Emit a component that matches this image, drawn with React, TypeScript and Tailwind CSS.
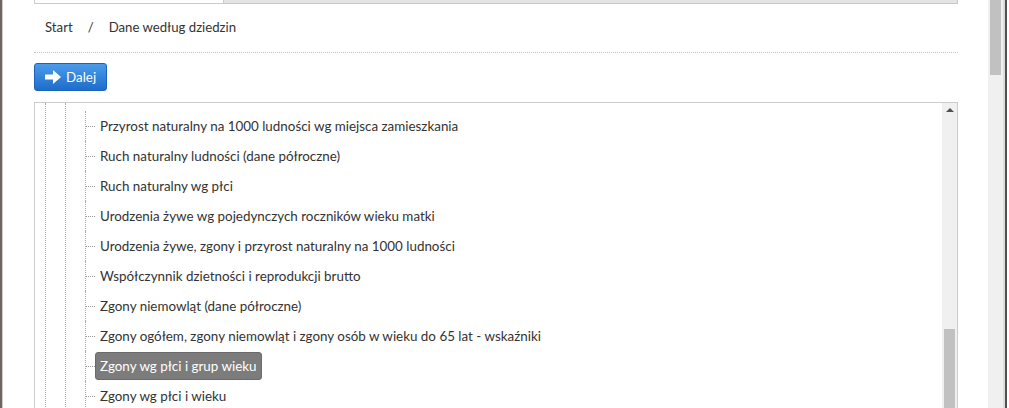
const items = [
  "Przyrost naturalny na 1000 ludności wg miejsca zamieszkania",
  "Ruch naturalny ludności (dane półroczne)",
  "Ruch naturalny wg płci",
  "Urodzenia żywe wg pojedynczych roczników wieku matki",
  "Urodzenia żywe, zgony i przyrost naturalny na 1000 ludności",
  "Współczynnik dzietności i reprodukcji brutto",
  "Zgony niemowląt (dane półroczne)",
  "Zgony ogółem, zgony niemowląt i zgony osób w wieku do 65 lat - wskaźniki",
  "Zgony wg płci i grup wieku",
  "Zgony wg płci i wieku",
]

const selected = "Zgony wg płci i grup wieku"

export default function App() {
  return (
    <div className="flex h-[408px] w-[1009px] overflow-hidden bg-white font-['Lato',sans-serif] text-[#333]">
      {/* window edge */}
      <div className="w-[2px] bg-[#6b6661]" />
      <div className="w-[1px] bg-[#d2cec9]" />

      <div className="min-w-0 flex-1 pl-[31px] pr-[30px]">
        {/* tabs */}
        <div className="flex h-[4px]">
          <div className="w-[190px] border-x border-b border-[#ccc] bg-white" />
          <div className="flex-1 border-b border-r border-[#c8c8c8] bg-[#e4e4e4]" />
        </div>

        {/* breadcrumb */}
        <div className="flex h-[49px] items-center border-b border-dotted border-[#c4c4c4] pl-[11px] text-[13.2px]">
          <span>Start</span>
          <span className="px-[15px]">/</span>
          <span>Dane według dziedzin</span>
        </div>

        <div className="pt-[10px]">
          <button className="flex h-[28px] w-[73px] items-center gap-[5px] rounded-[3px] border border-[#1b63bd] bg-linear-to-b from-[#4b9bea] to-[#1c6dcb] pl-[10px] text-[13.4px] text-white">
            <svg width="16" height="14" viewBox="0 0 16 14">
              <path d="M0 4.5h8V0l8 7-8 7V9.5H0z" fill="#fff" />
            </svg>
            Dalej
          </button>
        </div>

        {/* tree */}
        <div className="mt-[11px] flex h-[400px] border border-[#ccc]">
          <div className="flex flex-1">
            <div className="ml-[10px] w-[20px] border-l border-dotted border-[#aaa]" />
            <div className="w-[20px] border-l border-dotted border-[#aaa]" />
            <ul className="pt-[8px]">
              {items.map((t) => (
                <li key={t} className="flex h-[30px] items-center border-l border-dotted border-[#aaa]">
                  <span className="w-[9px] border-t border-dotted border-[#999]" />
                  <span
                    className={
                      t === selected
                        ? "flex h-[28px] items-center rounded-[3px] border border-[#6b6b6b] bg-[#7c7c7c] px-[4px] text-[13.4px] text-white"
                        : "flex h-[28px] items-center rounded-[3px] border border-transparent px-[4px] text-[13.4px]"
                    }
                  >
                    {t}
                  </span>
                </li>
              ))}
            </ul>
          </div>
          <div className="flex w-[15px] flex-col bg-[#f0f0f0]">
            <div className="flex h-[15px] justify-center pt-[5px]">
              <div className="h-0 w-0 border-x-[4px] border-b-[4px] border-x-transparent border-b-[#505050]" />
            </div>
            <div className="mx-[2px] mt-[211px] h-[100px] bg-[#c1c1c1]" />
          </div>
        </div>
      </div>

      {/* page scrollbar */}
      <div className="w-[15px] bg-[#f0f0f0]">
        <div className="ml-[2px] h-[75px] w-[11px] bg-[#c1c1c1]" />
      </div>
      <div className="w-[2px] bg-[#dcdcdc]" />
      <div className="w-[2px] bg-[#505050]" />
      <div className="w-[2px] bg-white" />
    </div>
  )
}
